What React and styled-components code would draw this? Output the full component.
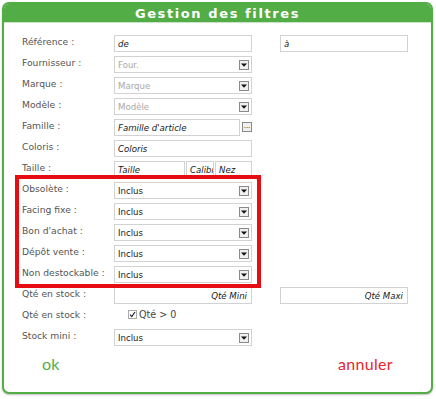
import React from "react";
import styled, { createGlobalStyle } from "styled-components";

const GlobalStyle = createGlobalStyle`
  body {
    margin: 0;
    background: #fff;
    font-family: "DejaVu Sans", Verdana, sans-serif;
  }
`;

const Panel = styled.div`
  box-sizing: border-box;
  margin: 2px;
  width: 431px;
  height: 392px;
  border: 2px solid #52ad47;
  border-radius: 7px;
  background: #fff;
  box-shadow: 0 1px 2px rgba(0, 0, 0, 0.25);
  display: flex;
  flex-direction: column;
  overflow: hidden;
`;

const Header = styled.div`
  height: 18px;
  background: #52ad47;
  color: #fff;
  font-weight: bold;
  font-size: 13px;
  letter-spacing: 1.6px;
  display: flex;
  align-items: center;
  justify-content: center;
  border-bottom: 1px solid #c9e6c4;
`;

const Body = styled.div`
  padding: 12px 0 0 18px;
  display: flex;
  flex-direction: column;
  gap: 4px;
`;

const Row = styled.div`
  display: flex;
  align-items: flex-start;
  height: 17px;
`;

const Label = styled.div`
  width: 92px;
  flex: none;
  font-size: 9.2px;
  color: #555;
  line-height: 13px;
`;

const Field = styled.div`
  box-sizing: border-box;
  width: ${(p) => p.$w || 138}px;
  height: 17px;
  flex: none;
  border: 1px solid #d2d2d2;
  background: #fff;
  display: flex;
  align-items: center;
  justify-content: ${(p) => (p.$right ? "flex-end" : "flex-start")};
  padding: 0 4px 0 3px;
  font-size: 8.6px;
  font-style: ${(p) => (p.$italic ? "italic" : "normal")};
  color: ${(p) => (p.$muted ? "#a8a8a8" : "#1a1a1a")};
  white-space: nowrap;
  overflow: hidden;
`;

const Spacer = styled.div`
  width: 28px;
  flex: none;
`;

const Group = styled.div`
  box-sizing: border-box;
  width: 246px;
  margin: -7px 0 -5px -7px;
  padding: 3px 0 1px 3px;
  border: 4px solid #e50d12;
  display: flex;
  flex-direction: column;
  gap: 4px;
  position: relative;
  z-index: 1;
`;

const SelectBox = styled(Field)`
  justify-content: space-between;
  padding-right: 2px;
`;

const ArrowBtn = styled.div`
  box-sizing: border-box;
  width: 10px;
  height: 10px;
  border: 1px solid #8a8a8a;
  background: #f0f0f0;
  display: flex;
  align-items: center;
  justify-content: center;
  flex: none;
`;

const Split = styled.div`
  display: flex;
  gap: 1px;
  width: 138px;
`;

const DotsBtn = styled(ArrowBtn)`
  margin-left: 2px;
  margin-top: 3px;
  font-size: 7px;
  line-height: 1;
  color: #222;
  align-items: flex-start;
`;

const CheckWrap = styled.label`
  display: flex;
  align-items: center;
  gap: 2px;
  margin-left: 14px;
  margin-top: 1px;
  font-size: 9.6px;
  color: #444;
`;

const Box = styled.span`
  box-sizing: border-box;
  width: 9px;
  height: 9px;
  border: 1px solid #aaa;
  background: #fff;
  display: flex;
  align-items: center;
  justify-content: center;
`;

const Footer = styled.div`
  display: flex;
  justify-content: space-between;
  padding: 8px 38px 0 38px;
  font-family: Lato, "Open Sans", sans-serif;
  font-size: 16px;
`;

const Action = styled.span`
  color: ${(p) => p.$color};
  letter-spacing: 0.3px;
`;

const Arrow = () => (
  <ArrowBtn>
    <svg width="6" height="4" viewBox="0 0 6 4">
      <path d="M0 0.5 H6 L3 3.8 Z" fill="#111" />
    </svg>
  </ArrowBtn>
);

const Select = ({ value, muted }) => (
  <SelectBox $muted={muted}>
    <span>{value}</span>
    <Arrow />
  </SelectBox>
);

const flags = ["Obsolète :", "Facing fixe :", "Bon d'achat :", "Dépôt vente :", "Non destockable :"];

export default function App() {
  return (
    <>
      <GlobalStyle />
      <Panel>
        <Header>Gestion des filtres</Header>
        <Body>
          <Row>
            <Label>Référence :</Label>
            <Field $italic>de</Field>
            <Spacer />
            <Field $italic $w={128}>à</Field>
          </Row>
          <Row>
            <Label>Fournisseur :</Label>
            <Select value="Four." muted />
          </Row>
          <Row>
            <Label>Marque :</Label>
            <Select value="Marque" muted />
          </Row>
          <Row>
            <Label>Modèle :</Label>
            <Select value="Modèle" muted />
          </Row>
          <Row>
            <Label>Famille :</Label>
            <Field $italic $w={126}>Famille d'article</Field>
            <DotsBtn>...</DotsBtn>
          </Row>
          <Row>
            <Label>Coloris :</Label>
            <Field $italic>Coloris</Field>
          </Row>
          <Row>
            <Label>Taille :</Label>
            <Split>
              <Field $italic $w={71}>Taille</Field>
              <Field $italic $w={28}>Calibre</Field>
              <Field $italic $w={37}>Nez</Field>
            </Split>
          </Row>
          <Group>
            {flags.map((f) => (
              <Row key={f}>
                <Label>{f}</Label>
                <Select value="Inclus" />
              </Row>
            ))}
          </Group>
          <Row>
            <Label>Qté en stock :</Label>
            <Field $italic $right>Qté Mini</Field>
            <Spacer />
            <Field $italic $right $w={128}>Qté Maxi</Field>
          </Row>
          <Row>
            <Label>Qté en stock :</Label>
            <CheckWrap>
              <Box>
                <svg width="7" height="7" viewBox="0 0 7 7">
                  <path d="M1 3.6 L2.8 5.6 L6 1" stroke="#222" strokeWidth="1.2" fill="none" />
                </svg>
              </Box>
              Qté &gt; 0
            </CheckWrap>
          </Row>
          <Row>
            <Label>Stock mini :</Label>
            <Select value="Inclus" />
          </Row>
        </Body>
        <Footer>
          <Action $color="#4fae48">ok</Action>
          <Action $color="#e8262b">annuler</Action>
        </Footer>
      </Panel>
    </>
  );
}
